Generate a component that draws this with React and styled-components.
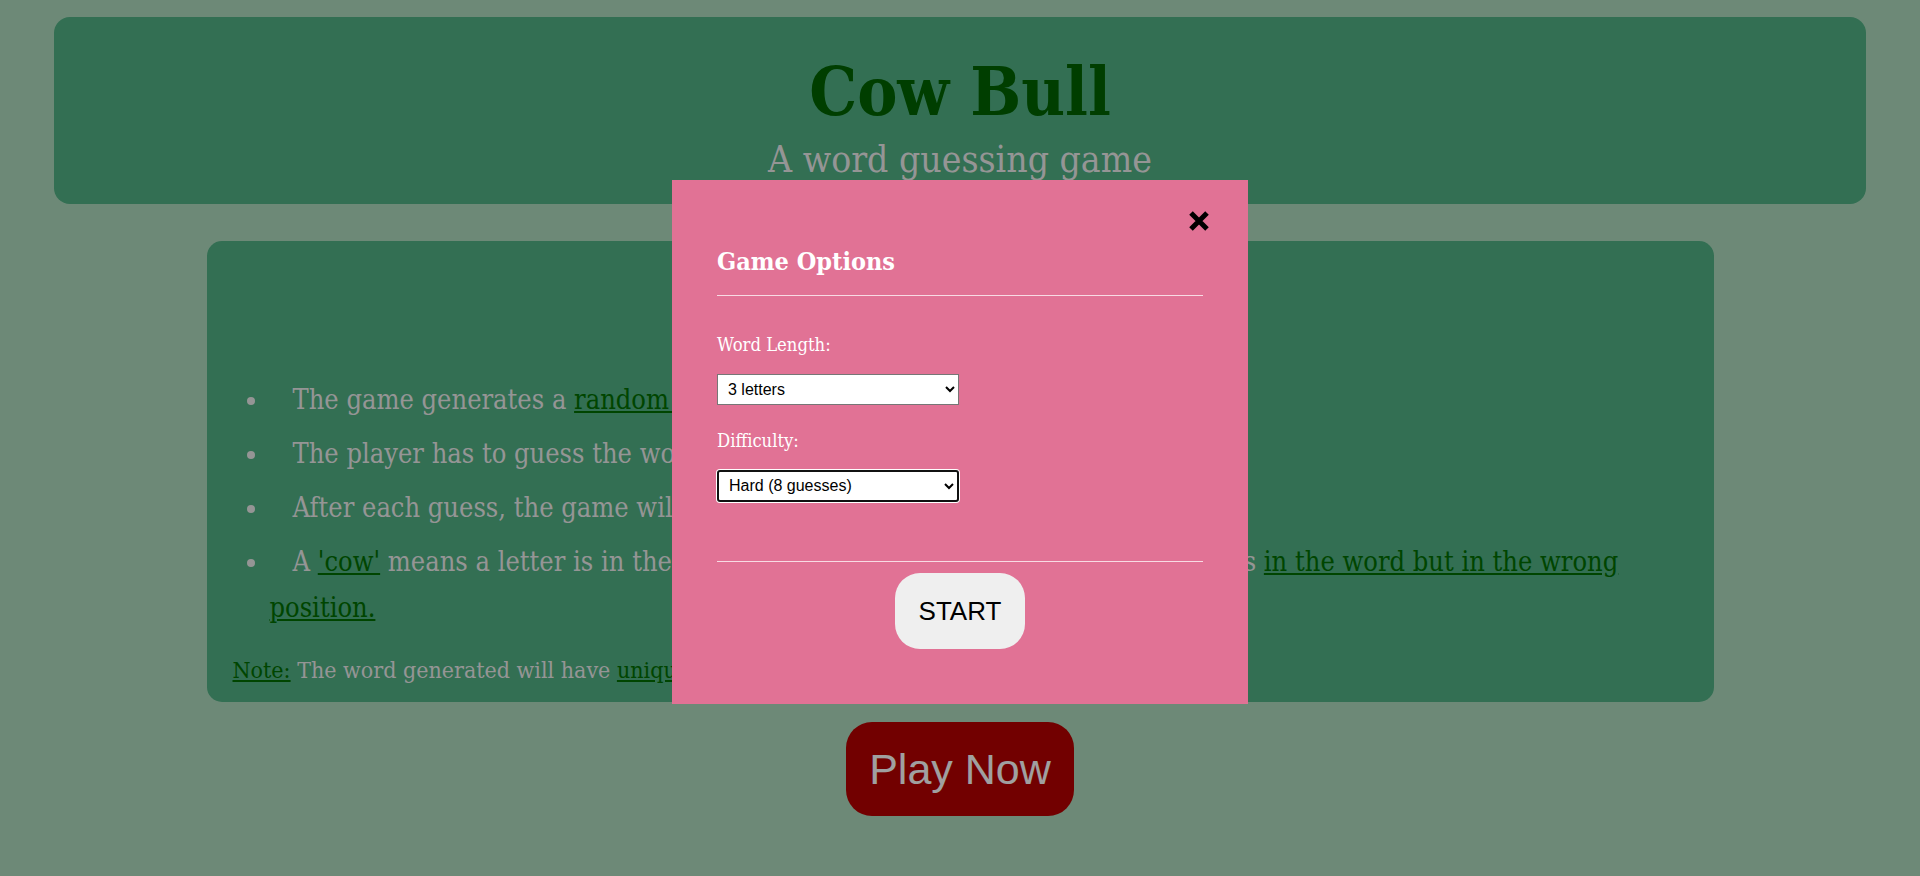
import React, {useState} from 'react';
import styled, {createGlobalStyle} from "styled-components";

const serif = `"DejaVu Serif Condensed", "DejaVu Serif", serif`;
const sans = `"Liberation Sans", Arial, sans-serif`;

function App() {
    const [wordLength, setWordLength] = useState('3');
    const [difficulty, setDifficulty] = useState('hard');
    const [open, setOpen] = useState(true);

    return (
        <>
            <GlobalStyle />
            <Page>
                <Header>
                    <Title>Cow Bull</Title>
                    <Subtitle>A word guessing game</Subtitle>
                </Header>

                <RulesCard>
                    <RulesHeading>How to Play</RulesHeading>
                    <RuleList>
                        <Rule>The game generates a <Hint href="#">random word of the chosen length.</Hint></Rule>
                        <Rule>The player has to guess the word in limited tries.</Rule>
                        <Rule>After each guess, the game will tell you the number of <Hint href="#">'cows' and 'bulls'.</Hint></Rule>
                        <Rule>
                            A <Hint href="#">'cow'</Hint> means a letter is in the correct place and a 'bull' means that a letter is <Hint href="#">in the word but in the wrong position.</Hint>
                        </Rule>
                    </RuleList>
                    <Note><Hint href="#">Note:</Hint> The word generated will have <Hint href="#">unique letters only.</Hint></Note>
                </RulesCard>

                <PlayButton onClick={() => setOpen(true)}>Play Now</PlayButton>
            </Page>

            {open && (
                <Overlay>
                    <Modal>
                        <CloseRow>
                            <CloseButton onClick={() => setOpen(false)} aria-label="close">
                                <svg width="22" height="22" viewBox="0 0 22 22">
                                    <path d="M3 3 L19 19 M19 3 L3 19" stroke="#000" strokeWidth="5" strokeLinecap="butt" />
                                </svg>
                            </CloseButton>
                        </CloseRow>
                        <ModalTitle>Game Options</ModalTitle>
                        <Divider $gap="18px 0 38px" />

                        <Field>
                            <FieldLabel htmlFor="len">Word Length:</FieldLabel>
                            <Select id="len" value={wordLength} onChange={(e) => setWordLength(e.target.value)}>
                                <option value="3">3 letters</option>
                                <option value="4">4 letters</option>
                                <option value="5">5 letters</option>
                            </Select>
                        </Field>
                        <Field>
                            <FieldLabel htmlFor="diff">Difficulty:</FieldLabel>
                            <Select id="diff" $focused value={difficulty} onChange={(e) => setDifficulty(e.target.value)}>
                                <option value="easy">Easy (15 guesses)</option>
                                <option value="medium">Medium (10 guesses)</option>
                                <option value="hard">Hard (8 guesses)</option>
                            </Select>
                        </Field>

                        <Divider $gap="59px 0 11px" />
                        <StartRow>
                            <StartButton>START</StartButton>
                        </StartRow>
                    </Modal>
                </Overlay>
            )}
        </>
    );
}

const GlobalStyle = createGlobalStyle`
    html, body {
        margin: 0;
        padding: 0;
        min-height: 100vh;
        background: #9cc5ab;
        font-family: ${serif};
    }
    * { box-sizing: border-box; }
`;

const Page = styled.main`
    display: flex;
    flex-direction: column;
    align-items: center;
    padding: 17px 54px 40px;
`;

const Header = styled.header`
    align-self: stretch;
    background: #499f77;
    border-radius: 16px;
    padding: 35px 0 22px;
    text-align: center;
`;

const Title = styled.h1`
    margin: 0;
    font-size: 67px;
    line-height: 80px;
    font-weight: 700;
    color: #005a00;
`;

const Subtitle = styled.p`
    margin: 6px 0 0;
    font-size: 37px;
    line-height: 44px;
    color: #d6d6d6;
`;

const RulesCard = styled.section`
    width: 1507px;
    margin-top: 37px;
    background: #499f77;
    border-radius: 15px;
    padding: 30px 26px 17px;
    color: #d6d6d6;
`;

const RulesHeading = styled.h2`
    margin: 0 0 62px;
    font-size: 36px;
    line-height: 44px;
    text-align: center;
    color: #005a00;
`;

const RuleList = styled.ul`
    margin: 0;
    padding-left: 37px;
`;

const Rule = styled.li`
    font-size: 27px;
    line-height: 46px;
    text-indent: 23px;
    & + & {
        margin-top: 8px;
    }
`;

const Hint = styled.a`
    color: #006400;
    text-decoration: underline;
`;

const Note = styled.p`
    margin: 24px 0 0;
    font-size: 23px;
    line-height: 30px;
`;

const PlayButton = styled.button`
    margin-top: 20px;
    padding: 22px 23px;
    border: none;
    border-radius: 26px;
    background: #a40000;
    color: #e5e5e5;
    font-family: ${sans};
    font-size: 43px;
    line-height: 50px;
    cursor: pointer;
`;

const Overlay = styled.div`
    position: fixed;
    inset: 0;
    background: rgba(0, 0, 0, 0.3);
    display: flex;
    align-items: center;
    justify-content: center;
`;

const Modal = styled.div`
    width: 576px;
    margin-top: 7px;
    padding: 30px 45px 55px;
    background: #e17295;
    color: #fff;
    display: flex;
    flex-direction: column;
`;

const CloseRow = styled.div`
    display: flex;
    justify-content: flex-end;
    margin-right: -7px;
    height: 22px;
`;

const CloseButton = styled.button`
    padding: 0;
    border: none;
    background: none;
    width: 22px;
    height: 22px;
    cursor: pointer;
    svg { display: block; }
`;

const ModalTitle = styled.h2`
    margin: 15px 0 0;
    font-size: 25px;
    line-height: 30px;
    font-weight: 700;
`;

const Divider = styled.hr`
    margin: ${({$gap}) => $gap};
    border: none;
    border-top: 1px solid rgba(255, 255, 255, 0.75);
    width: 100%;
`;

const Field = styled.div`
    display: flex;
    flex-direction: column;
    align-items: flex-start;
    & + & {
        margin-top: 25px;
    }
`;

const FieldLabel = styled.label`
    font-size: 18.3px;
    line-height: 22px;
    margin-bottom: 18px;
`;

const Select = styled.select`
    width: 242px;
    height: ${({$focused}) => $focused ? '32px' : '31px'};
    padding: 0 6px;
    font-family: ${sans};
    font-size: 16px;
    color: #000;
    background: #fff;
    border: ${({$focused}) => $focused ? '2px solid #111' : '1px solid #767676'};
    border-radius: ${({$focused}) => $focused ? '3px' : '0'};
    box-shadow: ${({$focused}) => $focused ? '0 0 0 1px #fff' : 'none'};
    outline: none;
`;

const StartRow = styled.div`
    display: flex;
    justify-content: center;
`;

const StartButton = styled.button`
    padding: 23px 24px;
    border: none;
    border-radius: 25px;
    background: #efefef;
    color: #000;
    font-family: ${sans};
    font-size: 26px;
    line-height: 30px;
    cursor: pointer;
`;

export default App;
